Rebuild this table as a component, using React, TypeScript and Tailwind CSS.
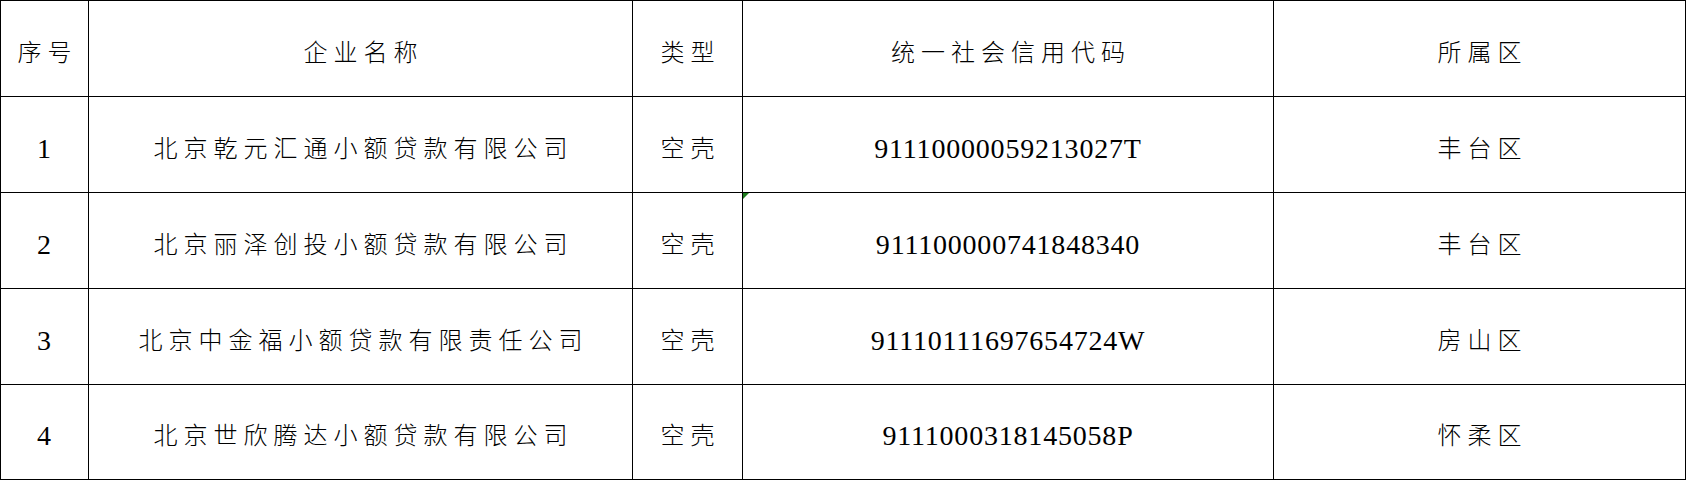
import React from "react";

const rows = [
  { no: "1", name: "北京乾元汇通小额贷款有限公司", type: "空壳", code: "91110000059213027T", area: "丰台区" },
  { no: "2", name: "北京丽泽创投小额贷款有限公司", type: "空壳", code: "911100000741848340", area: "丰台区" },
  { no: "3", name: "北京中金福小额贷款有限责任公司", type: "空壳", code: "91110111697654724W", area: "房山区" },
  { no: "4", name: "北京世欣腾达小额贷款有限公司", type: "空壳", code: "9111000318145058P", area: "怀柔区" },
];

const cjk =
  "font-['Noto_Sans_CJK_SC','Noto_Sans_CJK_JP',sans-serif] text-[24px] font-light tracking-[6px] pl-[6px] leading-none text-black";
const num = "font-['Liberation_Serif',serif] text-[28px] leading-none text-black tracking-[0.8px] pt-[4px]";

function Cell({ children, className = "" }: { children?: React.ReactNode; className?: string }) {
  return <div className={`bg-white flex items-center justify-center pt-[4px] ${className}`}>{children}</div>;
}

export default function App() {
  return (
    <div className="w-[1687px] h-[482px] bg-white">
      <div className="inline-grid grid-cols-[87px_543px_109px_530px_411px] grid-rows-[95px_95px_95px_95px_94px] gap-px p-px bg-black">
        <Cell><span className={cjk}>序号</span></Cell>
        <Cell><span className={cjk}>企业名称</span></Cell>
        <Cell><span className={cjk}>类型</span></Cell>
        <Cell><span className={cjk}>统一社会信用代码</span></Cell>
        <Cell><span className={cjk}>所属区</span></Cell>
        {rows.map((r, i) => (
          <React.Fragment key={r.no}>
            <Cell><span className={num}>{r.no}</span></Cell>
            <Cell><span className={cjk}>{r.name}</span></Cell>
            <Cell><span className={cjk}>{r.type}</span></Cell>
            <Cell className="relative">
              {i === 1 && (
                <svg className="absolute left-0 top-0" width="6" height="6" viewBox="0 0 6 6">
                  <polygon points="0,0 6,0 0,6" fill="#1e7d1e" />
                </svg>
              )}
              <span className={num}>{r.code}</span>
            </Cell>
            <Cell><span className={cjk}>{r.area}</span></Cell>
          </React.Fragment>
        ))}
      </div>
    </div>
  );
}
